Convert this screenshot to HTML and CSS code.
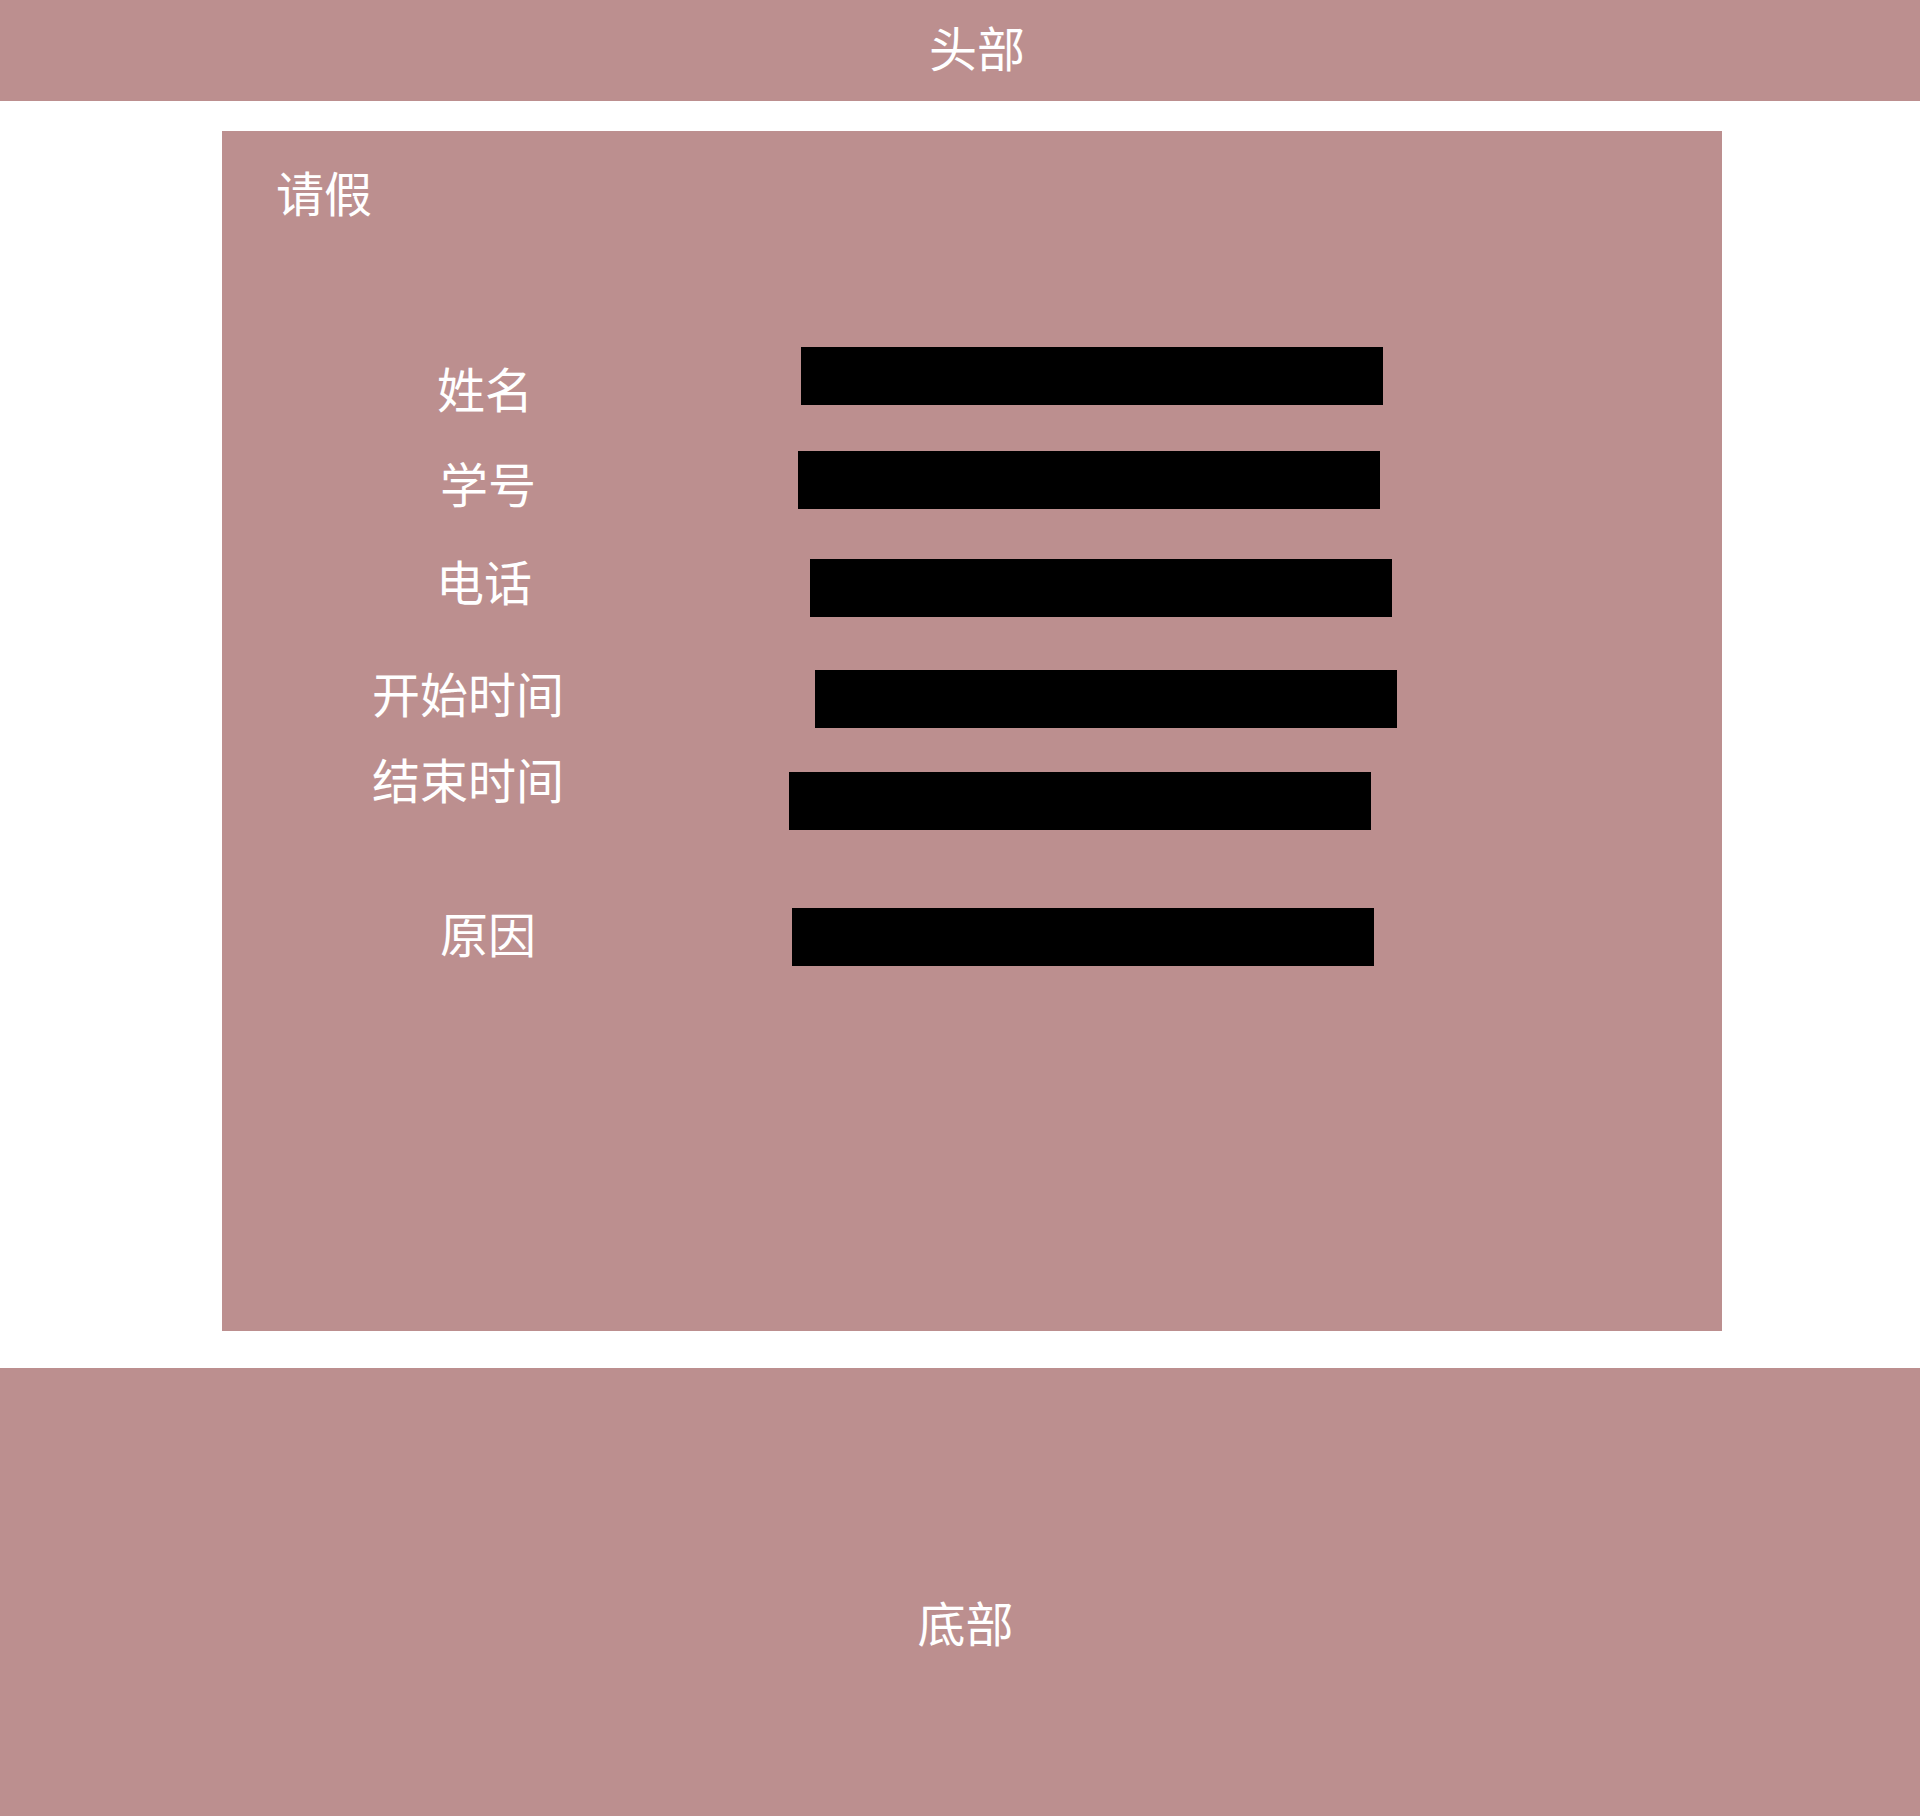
FILE: index.html
```html
<!DOCTYPE html>
<html lang="zh-CN">
<head>
<meta charset="utf-8">
<title>请假</title>
<link rel="stylesheet" href="styles.css">
</head>
<body>
<header class="top">头部</header>
<main class="card">
  <h1 class="title">请假</h1>
  <div class="form">
    <div class="row row-name"><span class="label">姓名</span><span class="field"></span></div>
    <div class="row row-id"><span class="label">学号</span><span class="field"></span></div>
    <div class="row row-phone"><span class="label">电话</span><span class="field"></span></div>
    <div class="row row-start"><span class="label">开始时间</span><span class="field"></span></div>
    <div class="row row-end"><span class="label">结束时间</span><span class="field"></span></div>
    <div class="row row-reason"><span class="label">原因</span><span class="field"></span></div>
  </div>
</main>
<footer class="bottom">底部</footer>
</body>
</html>
```
FILE: styles.css
```css
* { box-sizing: border-box; }
html, body { margin: 0; padding: 0; background: #ffffff; }
body {
  font-family: "Noto Sans CJK SC", "Noto Sans", sans-serif;
  color: #ffffff;
  font-size: 48px;
  line-height: 48px;
}
.top {
  height: 101px;
  background: #bc8f8f;
  text-align: center;
  line-height: 93px;
  padding-left: 34px;
}
.card {
  width: 1500px;
  height: 1200px;
  margin: 30px 0 0 222px;
  background: #bc8f8f;
  padding: 36px 0 0 54px;
}
.title {
  margin: 0;
  font-size: 48px;
  font-weight: normal;
  line-height: 48px;
}
.form {
  margin-top: 132px;
  margin-left: -54px;
}
.row {
  display: flex;
  align-items: flex-start;
}
.label {
  display: block;
  line-height: 48px;
  white-space: nowrap;
}
.field {
  display: block;
  width: 582px;
  height: 58px;
  background: #000000;
}
.row-name .label { margin: 16px 0 0 215px; }
.row-name .field { margin-left: 268px; }

.row-id { margin-top: 40px; }
.row-id .label { margin: 7px 0 0 218px; }
.row-id .field { margin-left: 262px; }

.row-phone { margin-top: 47px; }
.row-phone .label { margin-left: 214px; }
.row-phone .field { margin: 3px 0 0 278px; }

.row-start { margin-top: 51px; }
.row-start .label { margin-left: 150px; }
.row-start .field { margin: 2px 0 0 251px; }

.row-end { margin-top: 26px; }
.row-end .label { margin-left: 150px; }
.row-end .field { margin: 18px 0 0 225px; }

.row-reason { margin-top: 78px; }
.row-reason .label { margin-left: 218px; }
.row-reason .field { margin-left: 256px; }

.bottom {
  margin-top: 37px;
  height: 448px;
  background: #bc8f8f;
  text-align: center;
  padding: 229px 0 0 11px;
  line-height: 48px;
}
```
